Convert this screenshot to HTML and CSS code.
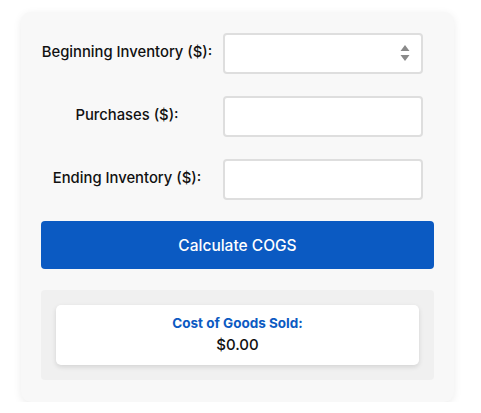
FILE: index.html
```html
<!DOCTYPE html>
<html>
<head>
<meta charset="utf-8">
<link rel="stylesheet" href="styles.css">
</head>
<body>
<div class="page">
  <div class="card">
    <div class="row">
      <label class="label">Beginning Inventory ($):</label>
      <div class="field">
        <input class="input" type="text">
        <svg class="spin" width="10" height="18" viewBox="0 0 10 18"><path d="M5 1 L9.5 7 L0.5 7 Z M5 17 L9.5 11 L0.5 11 Z" fill="#8a8a8a"/></svg>
      </div>
    </div>
    <div class="row">
      <label class="label">Purchases ($):</label>
      <div class="field"><input class="input" type="text"></div>
    </div>
    <div class="row">
      <label class="label">Ending Inventory ($):</label>
      <div class="field"><input class="input" type="text"></div>
    </div>
    <button class="btn">Calculate COGS</button>
    <div class="result">
      <div class="result-card">
        <div class="result-title">Cost of Goods Sold:</div>
        <div class="result-value">$0.00</div>
      </div>
    </div>
  </div>
</div>
</body>
</html>
```
FILE: styles.css
```css
html, body {
  margin: 0;
  padding: 0;
  background: #ffffff;
}
body {
  font-family: "Inter", "Liberation Sans", sans-serif;
  color: #111;
}
.page {
  padding: 12px 0 0 21px;
}
.card {
  width: 433px;
  box-sizing: border-box;
  background: #f8f8f8;
  border-radius: 10px;
  box-shadow: 0 2px 8px rgba(0,0,0,0.08);
  padding: 21px 20px 22px 20px;
  display: flex;
  flex-direction: column;
}
.row {
  display: flex;
  align-items: center;
  height: 41px;
  margin-bottom: 22px;
}
.row:nth-child(3) {
  margin-bottom: 21px;
}
.label {
  width: 172px;
  flex-shrink: 0;
  white-space: nowrap;
  text-align: center;
  font-size: 14.8px;
  font-weight: 500;
  color: #111;
  margin-right: 10px;
  padding-bottom: 4px;
}
.field {
  position: relative;
  width: 200px;
  height: 41px;
}
.input {
  width: 200px;
  height: 41px;
  box-sizing: border-box;
  border: 2px solid #dedede;
  border-radius: 4px;
  background: #fff;
  outline: none;
  margin: 0;
  padding: 0 10px;
}
.spin {
  position: absolute;
  left: 177px;
  top: 11px;
}
.btn {
  height: 48px;
  border: none;
  border-radius: 4px;
  background: #0b5ac2;
  color: #fff;
  font-family: inherit;
  font-size: 15.5px;
  font-weight: 500;
  margin: 0 0 21px 0;
  padding: 0;
  cursor: pointer;
}
.result {
  background: #f0f0f0;
  border-radius: 4px;
  padding: 15px;
}
.result-card {
  background: #fff;
  border-radius: 5px;
  box-shadow: 0 2px 5px rgba(0,0,0,0.12);
  height: 60px;
  box-sizing: border-box;
  padding-top: 10px;
  text-align: center;
}
.result-title {
  color: #0b5ac2;
  font-size: 13.5px;
  font-weight: 700;
  line-height: 17px;
}
.result-value {
  font-size: 15px;
  font-weight: 500;
  line-height: 20px;
  margin-top: 3px;
  color: #111;
}
```
